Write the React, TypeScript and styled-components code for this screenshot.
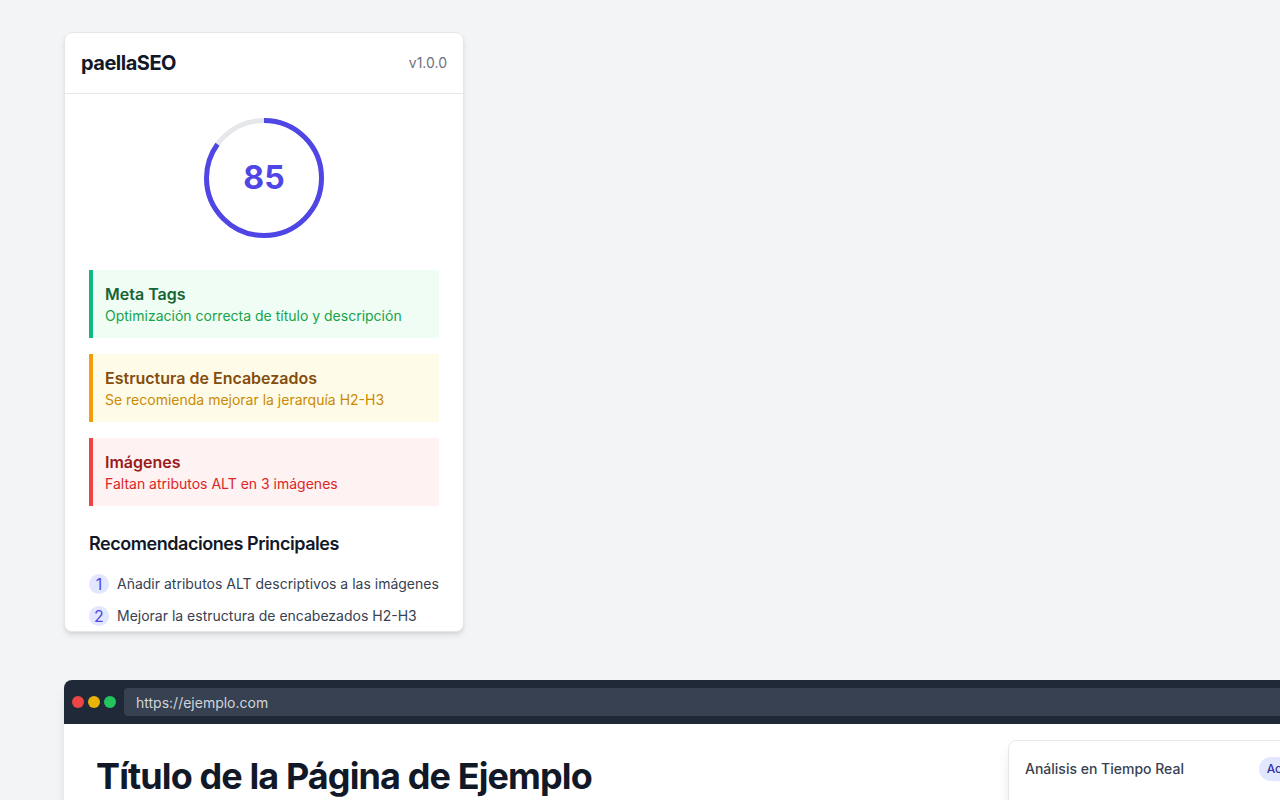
import React from 'react';
import styled, { createGlobalStyle } from 'styled-components';

const GlobalStyle = createGlobalStyle`
  *, *::before, *::after { box-sizing: border-box; }
  body {
    margin: 0;
    background: #f3f4f6;
    color: #111827;
    font-family: Inter, "Liberation Sans", sans-serif;
    font-size: 16px;
    line-height: 24px;
  }
  h1, h2, h3, p, ol { margin: 0; padding: 0; }
`;

const Page = styled.main`
  display: flex;
  flex-direction: column;
  gap: 48px;
  height: 100vh;
  padding: 32px 64px 0;
  overflow: hidden;
`;

const Popup = styled.section`
  flex: none;
  width: 400px;
  max-width: 100%;
  height: 600px;
  overflow: hidden;
  background: #fff;
  border: 1px solid #e5e7eb;
  border-radius: 8px;
  box-shadow: 0 4px 6px -1px rgba(0, 0, 0, 0.1), 0 2px 4px -1px rgba(0, 0, 0, 0.06);
`;

const PopupHeader = styled.header`
  display: flex;
  align-items: center;
  justify-content: space-between;
  padding: 16px;
  border-bottom: 1px solid #e5e7eb;
`;

const Brand = styled.h1`
  font-size: 20px;
  line-height: 28px;
  font-weight: 700;
  letter-spacing: -0.025em;
`;

const Version = styled.span`
  font-size: 14px;
  line-height: 20px;
  color: #6b7280;
`;

const PopupBody = styled.div`
  padding: 24px;
`;

const Score = styled.div`
  display: grid;
  place-items: center;
  margin-bottom: 32px;

  > * { grid-area: 1 / 1; }
`;

const Ring = styled.svg`
  display: block;
  width: 120px;
  height: 120px;
`;

const ScoreValue = styled.span`
  font-size: 32px;
  line-height: 38px;
  font-weight: 700;
  color: #4f46e5;
`;

const Alerts = styled.div`
  display: flex;
  flex-direction: column;
  gap: 16px;
  margin-bottom: 24px;
`;

type Tone = 'good' | 'warning' | 'bad';

const tones: Record<Tone, { edge: string; fill: string; title: string; text: string }> = {
  good: { edge: '#10b981', fill: '#f0fdf4', title: '#166534', text: '#16a34a' },
  warning: { edge: '#f59e0b', fill: '#fefce8', title: '#854d0e', text: '#ca8a04' },
  bad: { edge: '#ef4444', fill: '#fef2f2', title: '#991b1b', text: '#dc2626' },
};

const Alert = styled.article<{ $tone: Tone }>`
  padding: 12px;
  border-left: 4px solid ${(p) => tones[p.$tone].edge};
  background: ${(p) => tones[p.$tone].fill};

  h3 {
    font-size: 16px;
    line-height: 24px;
    font-weight: 600;
    color: ${(p) => tones[p.$tone].title};
  }

  p {
    font-size: 14px;
    line-height: 20px;
    color: ${(p) => tones[p.$tone].text};
  }
`;

const SectionTitle = styled.h2`
  margin-bottom: 16px;
  font-size: 18px;
  line-height: 28px;
  font-weight: 600;
  letter-spacing: -0.025em;
`;

const Recommendations = styled.ol`
  display: flex;
  flex-direction: column;
  gap: 12px;
  list-style: none;
`;

const Recommendation = styled.li`
  display: flex;
  align-items: center;
  gap: 8px;
  font-size: 14px;
  line-height: 20px;
  color: #374151;
`;

const Step = styled.span`
  display: flex;
  flex: none;
  align-items: center;
  justify-content: center;
  width: 20px;
  height: 20px;
  border-radius: 50%;
  background: #e0e7ff;
  color: #4f46e5;
  font-size: 16px;
`;

const Browser = styled.section`
  flex: none;
  width: 100vw;
  min-height: 400px;
  overflow: hidden;
  background: #fff;
  border-radius: 8px;
  box-shadow: 0 10px 15px -3px rgba(0, 0, 0, 0.1), 0 4px 6px -2px rgba(0, 0, 0, 0.05);
`;

const BrowserBar = styled.div`
  display: flex;
  align-items: center;
  gap: 8px;
  padding: 8px;
  background: #1f2937;
`;

const Dots = styled.div`
  display: flex;
  gap: 4px;
`;

const Dot = styled.span<{ $color: string }>`
  width: 12px;
  height: 12px;
  border-radius: 50%;
  background: ${(p) => p.$color};
`;

const Address = styled.input`
  flex: 1;
  min-width: 0;
  height: 28px;
  padding: 4px 12px;
  border: 0;
  border-radius: 4px;
  background: #374151;
  color: #d1d5db;
  font-family: inherit;
  font-size: 14px;
  line-height: 20px;
`;

const Viewport = styled.div`
  display: flex;
  align-items: flex-start;
  justify-content: space-between;
  padding: 16px;
`;

const PageTitle = styled.h1`
  padding: 16px;
  font-size: 36px;
  line-height: 40px;
  font-weight: 700;
  letter-spacing: -0.025em;
`;

const LivePanel = styled.aside`
  flex: none;
  width: 320px;
  min-height: 240px;
  padding: 16px;
  border: 1px solid #e5e7eb;
  border-radius: 8px;
  background: #fff;
  box-shadow: 0 10px 15px -3px rgba(0, 0, 0, 0.1), 0 4px 6px -2px rgba(0, 0, 0, 0.05);
`;

const PanelHeader = styled.div`
  display: flex;
  align-items: center;
  justify-content: space-between;
`;

const PanelTitle = styled.h2`
  font-size: 14px;
  line-height: 20px;
  font-weight: 500;
  color: #374151;
`;

const Badge = styled.span`
  padding: 4px 8px;
  border-radius: 12px;
  background: #e0e7ff;
  color: #3730a3;
  font-size: 12px;
  line-height: 16px;
  font-weight: 500;
`;

const alerts: { tone: Tone; title: string; text: string }[] = [
  { tone: 'good', title: 'Meta Tags', text: 'Optimización correcta de título y descripción' },
  { tone: 'warning', title: 'Estructura de Encabezados', text: 'Se recomienda mejorar la jerarquía H2-H3' },
  { tone: 'bad', title: 'Imágenes', text: 'Faltan atributos ALT en 3 imágenes' },
];

const recommendations = [
  'Añadir atributos ALT descriptivos a las imágenes',
  'Mejorar la estructura de encabezados H2-H3',
];

function ScoreRing({ value }: { value: number }) {
  return (
    <Score>
      <Ring viewBox="0 0 120 120" aria-hidden="true">
        <g fill="none" strokeWidth="5" transform="rotate(-90 60 60)">
          <circle cx="60" cy="60" r="57.5" stroke="#e5e7eb" />
          <circle cx="60" cy="60" r="57.5" stroke="#4f46e5" pathLength={100} strokeDasharray={`${value} 100`} />
        </g>
      </Ring>
      <ScoreValue>{value}</ScoreValue>
    </Score>
  );
}

export default function App() {
  return (
    <>
      <GlobalStyle />
      <Page>
        <Popup>
          <PopupHeader>
            <Brand>paellaSEO</Brand>
            <Version>v1.0.0</Version>
          </PopupHeader>
          <PopupBody>
            <ScoreRing value={85} />
            <Alerts>
              {alerts.map((a) => (
                <Alert key={a.title} $tone={a.tone}>
                  <h3>{a.title}</h3>
                  <p>{a.text}</p>
                </Alert>
              ))}
            </Alerts>
            <SectionTitle>Recomendaciones Principales</SectionTitle>
            <Recommendations>
              {recommendations.map((text, i) => (
                <Recommendation key={text}>
                  <Step>{i + 1}</Step>
                  <span>{text}</span>
                </Recommendation>
              ))}
            </Recommendations>
          </PopupBody>
        </Popup>

        <Browser>
          <BrowserBar>
            <Dots>
              <Dot $color="#ef4444" />
              <Dot $color="#eab308" />
              <Dot $color="#22c55e" />
            </Dots>
            <Address type="text" aria-label="Dirección" defaultValue="https://ejemplo.com" />
          </BrowserBar>
          <Viewport>
            <PageTitle>Título de la Página de Ejemplo</PageTitle>
            <LivePanel>
              <PanelHeader>
                <PanelTitle>Análisis en Tiempo Real</PanelTitle>
                <Badge>Activo</Badge>
              </PanelHeader>
            </LivePanel>
          </Viewport>
        </Browser>
      </Page>
    </>
  );
}
